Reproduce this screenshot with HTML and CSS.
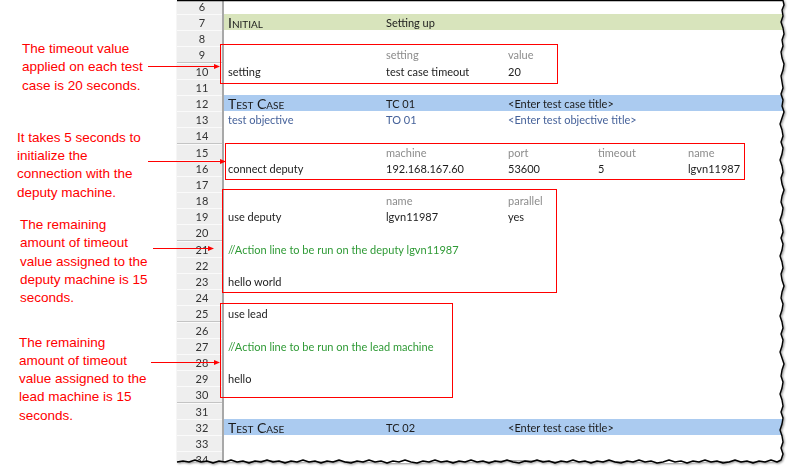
FILE: index.html
```html
<!DOCTYPE html>
<html>
<head>
<meta charset="utf-8">
<link rel="stylesheet" href="styles.css">
</head>
<body>
<div class="page">
  <div class="notes">
    <p class="note n1">The timeout value<br>applied on each test<br>case is 20 seconds.</p>
    <p class="note n2">It takes 5 seconds to<br>initialize the<br>connection with the<br>deputy machine.</p>
    <p class="note n3">The remaining<br>amount of timeout<br>value assigned to the<br>deputy machine is 15<br>seconds.</p>
    <p class="note n4">The remaining<br>amount of timeout<br>value assigned to the<br>lead machine is 15<br>seconds.</p>
  </div>
  <div class="paper">
    <div class="sheet">
      <div class="rows">
        <div class="row"><div class="rh">6</div></div>
        <div class="row green"><div class="rh">7</div><div class="c h">Initial</div><div class="c">Setting up</div></div>
        <div class="row"><div class="rh">8</div></div>
        <div class="row"><div class="rh">9</div><div class="c"></div><div class="c lbl">setting</div><div class="c lbl">value</div></div>
        <div class="row"><div class="rh">10</div><div class="c">setting</div><div class="c">test case timeout</div><div class="c">20</div></div>
        <div class="row"><div class="rh">11</div></div>
        <div class="row blue"><div class="rh">12</div><div class="c h">Test Case</div><div class="c">TC 01</div><div class="c">&lt;Enter test case title&gt;</div></div>
        <div class="row bluetext"><div class="rh">13</div><div class="c">test objective</div><div class="c">TO 01</div><div class="c">&lt;Enter test objective title&gt;</div></div>
        <div class="row"><div class="rh">14</div></div>
        <div class="row"><div class="rh">15</div><div class="c"></div><div class="c lbl">machine</div><div class="c lbl">port</div><div class="c lbl">timeout</div><div class="c lbl">name</div></div>
        <div class="row"><div class="rh">16</div><div class="c">connect deputy</div><div class="c">192.168.167.60</div><div class="c">53600</div><div class="c">5</div><div class="c">lgvn11987</div></div>
        <div class="row"><div class="rh">17</div></div>
        <div class="row"><div class="rh">18</div><div class="c"></div><div class="c lbl">name</div><div class="c lbl">parallel</div></div>
        <div class="row"><div class="rh">19</div><div class="c">use deputy</div><div class="c">lgvn11987</div><div class="c">yes</div></div>
        <div class="row"><div class="rh">20</div></div>
        <div class="row"><div class="rh">21</div><div class="c span cmt">//Action line to be run on the deputy lgvn11987</div></div>
        <div class="row"><div class="rh">22</div></div>
        <div class="row"><div class="rh">23</div><div class="c">hello world</div></div>
        <div class="row"><div class="rh">24</div></div>
        <div class="row"><div class="rh">25</div><div class="c">use lead</div></div>
        <div class="row"><div class="rh">26</div></div>
        <div class="row"><div class="rh">27</div><div class="c span cmt">//Action line to be run on the lead machine</div></div>
        <div class="row"><div class="rh">28</div></div>
        <div class="row"><div class="rh">29</div><div class="c">hello</div></div>
        <div class="row"><div class="rh">30</div></div>
        <div class="row"><div class="rh">31</div></div>
        <div class="row blue"><div class="rh">32</div><div class="c h">Test Case</div><div class="c">TC 02</div><div class="c">&lt;Enter test case title&gt;</div></div>
        <div class="row"><div class="rh">33</div></div>
        <div class="row"><div class="rh">34</div></div>
      </div>
    </div>
    <svg class="edge" width="615" height="472" viewBox="0 0 615 472">
      <path d="M0,0.5 L606,0.5 L607,5 L605,10 L606,16 L604,22 L606,28 L607,34 L605,40 L606,46 L604,52 L605,58 L607,64 L606,70 L604,76 L605,82 L606,88 L604,94 L606,100 L605,106 L607,112 L605,118 L603,124 L605,130 L606,136 L604,142 L606,148 L605,154 L603,160 L605,166 L606,172 L604,178 L605,184 L607,190 L605,196 L604,202 L606,208 L605,214 L603,220 L605,226 L606,232 L604,238 L606,244 L605,250 L603,256 L605,262 L606,268 L604,274 L605,280 L607,286 L605,292 L604,298 L606,304 L605,310 L603,316 L605,322 L606,328 L604,334 L606,340 L605,346 L603,352 L605,358 L607,364 L605,370 L604,376 L606,382 L605,388 L603,394 L605,400 L606,406 L604,412 L606,418 L605,424 L603,430 L605,436 L606,442 L604,448 L606,454 L604,460 L600,462 L594,460 L588,462 L582,461 L576,463 L570,461 L564,462 L558,460 L552,462 L546,463 L540,461 L534,462 L528,460 L522,462 L516,461 L510,463 L504,461 L498,462 L492,460 L486,462 L480,463 L474,461 L468,462 L462,460 L456,462 L450,461 L444,463 L438,462 L432,460 L426,462 L420,461 L414,463 L408,461 L402,462 L396,460 L390,462 L384,461 L378,463 L372,461 L366,462 L360,460 L354,462 L348,461 L342,463 L336,462 L330,460 L324,462 L318,461 L312,463 L306,461 L300,462 L294,460 L288,462 L282,461 L276,463 L270,461 L264,462 L258,460 L252,462 L246,461 L240,463 L234,462 L228,460 L222,462 L216,461 L210,463 L204,461 L198,462 L192,460 L186,462 L180,461 L174,463 L168,462 L162,460 L156,462 L150,461 L144,463 L138,461 L132,462 L126,460 L120,462 L114,461 L108,463 L102,461 L96,462 L90,460 L84,462 L78,461 L72,463 L66,461 L60,462 L54,460 L48,462 L42,461 L36,463 L30,461 L24,462 L18,460 L12,462 L6,461 L0,462" fill="none" stroke="#000" stroke-width="1.4" stroke-linejoin="round"/>
    </svg>
  </div>
  <svg class="marks" width="792" height="472" viewBox="0 0 792 472">
    <g fill="none" stroke="#f00" stroke-width="1">
      <rect x="220.5" y="44.5" width="337" height="39"/>
      <rect x="225.5" y="143.5" width="519" height="36"/>
      <rect x="222.5" y="189.5" width="334" height="103"/>
      <rect x="220.5" y="303.5" width="232" height="94"/>
      <line x1="148" y1="66.5" x2="216" y2="66.5"/>
      <line x1="148" y1="161.5" x2="222" y2="161.5"/>
      <line x1="153" y1="248.5" x2="210" y2="248.5"/>
      <line x1="151" y1="362.5" x2="216" y2="362.5"/>
    </g>
    <g fill="#f00">
      <polygon points="220,66.5 214,64 214,69"/>
      <polygon points="226,161.5 220,159 220,164"/>
      <polygon points="214,248.5 208,246 208,251"/>
      <polygon points="220,362.5 214,360 214,365"/>
    </g>
  </svg>
</div>
</body>
</html>
```

FILE: styles.css
```css
html, body {
  margin: 0;
  padding: 0;
  background: #fff;
}
.page {
  position: relative;
  width: 792px;
  height: 472px;
  overflow: hidden;
  display: flex;
}
.notes {
  width: 177px;
  flex: none;
  display: flex;
  flex-direction: column;
}
.note {
  margin: 0;
  font-family: "Liberation Sans", Arial, sans-serif;
  font-size: 13.5px;
  line-height: 18.3px;
  color: #f00;
  white-space: nowrap;
}
.n1 { margin-top: 40px; padding-left: 22px; }
.n2 { margin-top: 34px; padding-left: 17px; }
.n3 { margin-top: 14px; padding-left: 20px; }
.n4 { margin-top: 26px; padding-left: 19px; }

.paper {
  position: relative;
  width: 615px;
  height: 472px;
  flex: none;
  filter: drop-shadow(1px 1px 1px rgba(0,0,0,0.45));
}
.sheet {
  width: 615px;
  height: 472px;
  overflow: hidden;
  background: #fff;
  clip-path: polygon(0 0, 606px 0, 607px 5px, 605px 10px, 606px 16px, 604px 22px, 606px 28px, 607px 34px, 605px 40px, 606px 46px, 604px 52px, 605px 58px, 607px 64px, 606px 70px, 604px 76px, 605px 82px, 606px 88px, 604px 94px, 606px 100px, 605px 106px, 607px 112px, 605px 118px, 603px 124px, 605px 130px, 606px 136px, 604px 142px, 606px 148px, 605px 154px, 603px 160px, 605px 166px, 606px 172px, 604px 178px, 605px 184px, 607px 190px, 605px 196px, 604px 202px, 606px 208px, 605px 214px, 603px 220px, 605px 226px, 606px 232px, 604px 238px, 606px 244px, 605px 250px, 603px 256px, 605px 262px, 606px 268px, 604px 274px, 605px 280px, 607px 286px, 605px 292px, 604px 298px, 606px 304px, 605px 310px, 603px 316px, 605px 322px, 606px 328px, 604px 334px, 606px 340px, 605px 346px, 603px 352px, 605px 358px, 607px 364px, 605px 370px, 604px 376px, 606px 382px, 605px 388px, 603px 394px, 605px 400px, 606px 406px, 604px 412px, 606px 418px, 605px 424px, 603px 430px, 605px 436px, 606px 442px, 604px 448px, 606px 454px, 604px 460px, 600px 462px, 570px 461px, 540px 461px, 510px 463px, 480px 463px, 450px 461px, 420px 461px, 390px 462px, 360px 460px, 330px 460px, 300px 462px, 270px 461px, 240px 463px, 210px 463px, 180px 461px, 150px 461px, 120px 462px, 90px 460px, 60px 462px, 30px 461px, 0 462px);
}
.rows {
  margin-top: -2.2px;
  font-family: "Lato", "Liberation Sans", sans-serif;
  font-size: 11px;
  color: #1c1c1c;
}
.row {
  display: grid;
  grid-template-columns: 47px 158px 122px 90px 90px 1fr;
  height: 16.2px;
}
.rh {
  background: #eeeeee;
  border-right: 2px solid #a8a8a8;
  box-shadow: inset 0 -1px 0 #c4c4c4, inset 0 1px 0 #fafafa;
  color: #333;
  text-align: center;
  padding-left: 5px;
  line-height: 17px;
  font-size: 11px;
  font-family: "Lato", "Liberation Sans", sans-serif;
}
.c {
  padding-left: 4px;
  line-height: 17px;
  white-space: nowrap;
  overflow: visible;
}
.span { grid-column: 2 / -1; }
.green { background: #d8e4bc; }
.blue { background: #abcbf0; }
.h {
  font-variant: small-caps;
  font-size: 14px;
  color: #1a1a1a;
  line-height: 18px;
}
.lbl { color: #8c8c8c; }
.bluetext .c { color: #46629a; }
.cmt { color: #2f9a36; }

.edge {
  position: absolute;
  left: 0;
  top: 0;
  overflow: visible;
}
.marks {
  position: absolute;
  left: 0;
  top: 0;
  pointer-events: none;
}
```
